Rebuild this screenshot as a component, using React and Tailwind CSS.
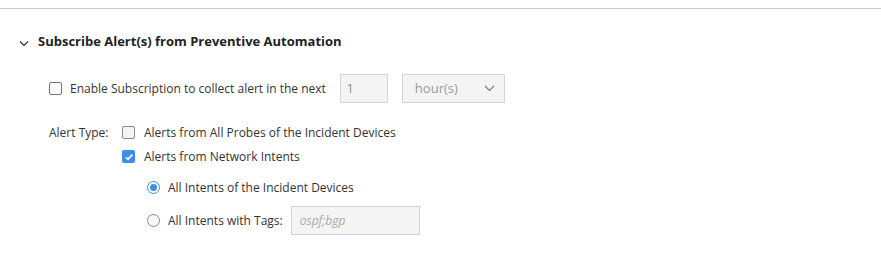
import React from "react";

function Check({ checked }) {
  if (checked) {
    return (
      <span className="w-[13px] h-[13px] rounded-[2px] bg-[#3d8ee8] flex items-center justify-center shrink-0">
        <svg width="10" height="10" viewBox="0 0 10 10">
          <path d="M1.8 5.2 L4 7.4 L8.3 2.6" fill="none" stroke="white" strokeWidth="1.6" />
        </svg>
      </span>
    );
  }
  return <span className="w-[13px] h-[13px] rounded-[2px] border border-[#767676] bg-white shrink-0 box-border" />;
}

function Radio({ checked }) {
  if (checked) {
    return (
      <span className="w-[13px] h-[13px] rounded-full border border-[#3d8ee8] bg-white flex items-center justify-center shrink-0 box-border">
        <span className="w-[7px] h-[7px] rounded-full bg-[#3d8ee8]" />
      </span>
    );
  }
  return <span className="w-[13px] h-[13px] rounded-full border border-[#8a8a8a] bg-[#f8f8f8] shrink-0 box-border" />;
}

export default function App() {
  return (
    <div className="w-[881px] h-[266px] bg-white text-[#333] text-[12px] font-['Open_Sans',sans-serif] relative">
      <div className="pt-[8px]">
        <div className="h-[1px] bg-[#c8c8c8]" />
      </div>
      <div className="flex items-center mt-[24px] pl-[19px] h-[18px]">
        <svg width="10" height="7" viewBox="0 0 10 7" className="mt-[3px]">
          <path d="M1 1.5 L5 5.5 L9 1.5" fill="none" stroke="#333" strokeWidth="1.2" />
        </svg>
        <span className="ml-[9px] text-[13px] font-bold text-[#222]">Subscribe Alert(s) from Preventive Automation</span>
      </div>
      <div className="flex items-center pl-[49px] mt-[23px] h-[29px]">
        <Check />
        <span className="ml-[8px]">Enable Subscription to collect alert in the next</span>
        <div className="ml-[14px] w-[48px] h-[29px] border border-[#d4d4d4] bg-[#f4f4f4] box-border flex items-center pl-[6px] text-[#888]">1</div>
        <div className="ml-[14px] w-[103px] h-[29px] border border-[#d4d4d4] bg-[#f4f4f4] box-border flex items-center pl-[12px] pr-[9px] justify-between text-[#999] text-[13px]">
          <span>hour(s)</span>
          <svg width="11" height="7" viewBox="0 0 11 7">
            <path d="M1 1 L5.5 5.5 L10 1" fill="none" stroke="#777" strokeWidth="1.1" />
          </svg>
        </div>
      </div>
      <div className="flex pl-[49px] mt-[21px]">
        <span className="w-[73px] h-[17px] flex items-center">Alert Type:</span>
        <div className="flex flex-col gap-[7px]">
          <div className="flex items-center h-[17px]">
            <span className="w-[13px] h-[13px] rounded-[2px] border border-[#8a8a8a] bg-[#f4f4f4] shrink-0 box-border" />
            <span className="ml-[9px]">Alerts from All Probes of the Incident Devices</span>
          </div>
          <div className="flex items-center h-[17px]">
            <Check checked />
            <span className="ml-[9px]">Alerts from Network Intents</span>
          </div>
        </div>
      </div>
      <div className="pl-[147px] mt-[14px] flex flex-col">
        <div className="flex items-center h-[17px]">
          <Radio checked />
          <span className="ml-[8px]">All Intents of the Incident Devices</span>
        </div>
        <div className="flex items-center mt-[10px] h-[29px]">
          <Radio />
          <span className="ml-[8px]">All Intents with Tags:</span>
          <div className="ml-[8px] w-[129px] h-[29px] border border-[#d4d4d4] bg-[#f4f4f4] box-border flex items-center pl-[8px] italic text-[#aaa]">ospf;bgp</div>
        </div>
      </div>
    </div>
  );
}
